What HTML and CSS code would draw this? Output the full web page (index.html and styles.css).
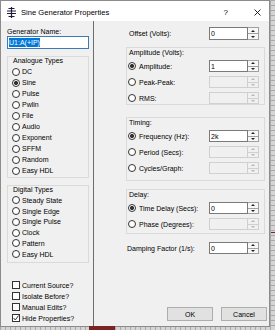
FILE: index.html
```html
<!DOCTYPE html>
<html lang="en">
<head>
  <meta charset="UTF-8" />
  <title>Sine Generator Properties</title>
  <link rel="stylesheet" href="styles.css">
</head>
<body>
  <div class="canvas">
    <div class="wire wire-bottom"></div>
    <div class="wire wire-right"></div>

    <div class="dialog">
      <div class="titlebar">
        <svg class="app-icon" width="9" height="11" viewBox="0 0 9 11">
          <path d="M4.5 0v11" stroke="#1c1c3a" stroke-width="1.2" fill="none"/>
          <path d="M1.5 1.5h6M0 4h9M0 6.5h9M1.5 9.5h6" stroke="#1c1c3a" stroke-width="1.1" fill="none"/>
        </svg>
        <span class="title">Sine Generator Properties</span>
        <span class="help">?</span>
        <svg class="close" width="7" height="7" viewBox="0 0 7 7">
          <path d="M0.5 0.5l6 6M6.5 0.5l-6 6" stroke="#111" stroke-width="0.9" fill="none"/>
        </svg>
      </div>

      <div class="content">
        <div class="left">
          <div class="name-label">Generator Name:</div>
          <div class="name-input"><span class="sel">U1:A(+IP)</span></div>

          <div class="group types analogue">
            <div class="caption">Analogue Types</div>
            <label class="opt"><span class="radio"></span>DC</label>
            <label class="opt"><span class="radio checked"></span>Sine</label>
            <label class="opt"><span class="radio"></span>Pulse</label>
            <label class="opt"><span class="radio"></span>Pwlin</label>
            <label class="opt"><span class="radio"></span>File</label>
            <label class="opt"><span class="radio"></span>Audio</label>
            <label class="opt"><span class="radio"></span>Exponent</label>
            <label class="opt"><span class="radio"></span>SFFM</label>
            <label class="opt"><span class="radio"></span>Random</label>
            <label class="opt"><span class="radio"></span>Easy HDL</label>
          </div>

          <div class="group types digital">
            <div class="caption">Digital Types</div>
            <label class="opt"><span class="radio"></span>Steady State</label>
            <label class="opt"><span class="radio"></span>Single Edge</label>
            <label class="opt"><span class="radio"></span>Single Pulse</label>
            <label class="opt"><span class="radio"></span>Clock</label>
            <label class="opt"><span class="radio"></span>Pattern</label>
            <label class="opt"><span class="radio"></span>Easy HDL</label>
          </div>

          <div class="checks">
            <label class="opt"><span class="box"></span>Current Source?</label>
            <label class="opt"><span class="box"></span>Isolate Before?</label>
            <label class="opt"><span class="box"></span>Manual Edits?</label>
            <label class="opt">
              <span class="box">
                <svg width="6" height="6" viewBox="0 0 6 6"><path d="M0.5 3l1.8 2 3.2-4.5" stroke="#222" stroke-width="0.9" fill="none"/></svg>
              </span>Hide Properties?
            </label>
          </div>
        </div>

        <div class="right">
          <div class="row plain offset">
            <span class="lbl">Offset (Volts):</span>
            <div class="spin"><div class="field">0</div><div class="arrows"><span class="up"></span><span class="down"></span></div></div>
          </div>

          <div class="group panel amp">
            <div class="caption">Amplitude (Volts):</div>
            <div class="row">
              <label class="lbl"><span class="radio checked"></span>Amplitude:</label>
              <div class="spin"><div class="field">1</div><div class="arrows"><span class="up"></span><span class="down"></span></div></div>
            </div>
            <div class="row">
              <label class="lbl"><span class="radio"></span>Peak-Peak:</label>
              <div class="spin off"><div class="field"></div><div class="arrows"><span class="up"></span><span class="down"></span></div></div>
            </div>
            <div class="row">
              <label class="lbl"><span class="radio"></span>RMS:</label>
              <div class="spin off"><div class="field"></div><div class="arrows"><span class="up"></span><span class="down"></span></div></div>
            </div>
          </div>

          <div class="group panel timing">
            <div class="caption">Timing:</div>
            <div class="row">
              <label class="lbl"><span class="radio checked"></span>Frequency (Hz):</label>
              <div class="spin"><div class="field">2k</div><div class="arrows"><span class="up"></span><span class="down"></span></div></div>
            </div>
            <div class="row">
              <label class="lbl"><span class="radio"></span>Period (Secs):</label>
              <div class="spin off"><div class="field"></div><div class="arrows"><span class="up"></span><span class="down"></span></div></div>
            </div>
            <div class="row">
              <label class="lbl"><span class="radio"></span>Cycles/Graph:</label>
              <div class="spin off"><div class="field"></div><div class="arrows"><span class="up"></span><span class="down"></span></div></div>
            </div>
          </div>

          <div class="group panel delay">
            <div class="caption">Delay:</div>
            <div class="row">
              <label class="lbl"><span class="radio checked"></span>Time Delay (Secs):</label>
              <div class="spin"><div class="field">0</div><div class="arrows"><span class="up"></span><span class="down"></span></div></div>
            </div>
            <div class="row">
              <label class="lbl"><span class="radio"></span>Phase (Degrees):</label>
              <div class="spin off"><div class="field"></div><div class="arrows"><span class="up"></span><span class="down"></span></div></div>
            </div>
          </div>

          <div class="row plain damping">
            <span class="lbl">Damping Factor (1/s):</span>
            <div class="spin"><div class="field">0</div><div class="arrows"><span class="up"></span><span class="down"></span></div></div>
          </div>

          <div class="buttons">
            <button>OK</button>
            <button>Cancel</button>
          </div>
        </div>
      </div>
    </div>
  </div>
</body>
</html>
```

FILE: styles.css
```css
* {
  box-sizing: border-box;
}
body {
  margin: 0;
  font-family: "Liberation Sans", Arial, sans-serif;
  font-size: 7px;
  color: #000;
}
.canvas {
  position: relative;
  width: 275px;
  height: 330px;
  overflow: hidden;
  background-color: #d4d4d4;
  background-image:
    linear-gradient(90deg, #a9a9a9 1px, transparent 1px),
    linear-gradient(#a9a9a9 1px, transparent 1px);
  background-size: 5px 5px;
}
.wire {
  position: absolute;
  background: #7a2424;
}
.wire-bottom {
  left: 89px;
  top: 326px;
  width: 26px;
  height: 4px;
}
.wire-right {
  left: 271px;
  top: 232px;
  width: 4px;
  height: 1px;
}

/* dialog frame */
.dialog {
  width: 270px;
  height: 327px;
  background: #f0f0f0;
  border: 1px solid #8c8c8c;
  display: flex;
  flex-direction: column;
}
.titlebar {
  height: 20px;
  flex: none;
  background: #fff;
  display: flex;
  align-items: center;
  padding: 2px 8px 0 6px;
}
.app-icon {
  flex: none;
}
.title {
  margin-left: 5px;
  font-size: 7.6px;
}
.help {
  margin-left: auto;
  font-size: 8px;
  margin-right: 26px;
}
.close {
  flex: none;
}
.content {
  flex: 1;
  display: flex;
}

/* left column */
.left {
  width: 93px;
  flex: none;
  border-right: 1px solid #6d6d6d;
  padding: 6px 0 0 6px;
}
.name-label {
  line-height: 9px;
  height: 9px;
}
.name-input {
  width: 82px;
  height: 13px;
  border: 1px solid #3d7ab8;
  background: #fff;
  padding: 1px 0 0 1px;
}
.sel {
  display: inline-block;
  background: #0078d7;
  color: #fff;
  line-height: 9px;
}
.group {
  border: 1px solid #dadada;
}
.caption {
  line-height: 7px;
  height: 7px;
}
.types {
  width: 82px;
  margin-top: 7px;
}
.types .caption {
  line-height: 8px;
  height: 8px;
  padding-left: 5px;
  margin-bottom: 1px;
}
.opt {
  display: flex;
  align-items: center;
  white-space: nowrap;
}
.types .opt {
  height: 11px;
  padding-left: 4px;
}
.analogue {
  padding-bottom: 1px;
}
.digital .opt {
  height: 10.75px;
}
.digital {
  padding-bottom: 2px;
}
.radio {
  flex: none;
  width: 8px;
  height: 8px;
  border: 1px solid #333;
  border-radius: 50%;
  background: #fff;
  margin-right: 2px;
}
.radio.checked {
  background: radial-gradient(circle, #333 0 1.8px, #fff 2.3px);
}
.checks {
  margin-top: 17px;
  padding-left: 5px;
}
.checks .opt {
  height: 11px;
}
.box {
  flex: none;
  width: 8px;
  height: 8px;
  border: 1px solid #333;
  background: #fff;
  margin-right: 2px;
  display: flex;
  align-items: center;
  justify-content: center;
}

/* right column */
.right {
  flex: 1;
  display: flex;
  flex-direction: column;
  padding: 6px 0 0 32px;
}
.row {
  display: flex;
  align-items: center;
  height: 12px;
  margin-top: 4px;
}
.row .lbl {
  width: 82px;
  display: flex;
  align-items: center;
  padding-left: 1px;
  white-space: nowrap;
}
.row .radio {
  margin-right: 3px;
}
.row.plain {
  margin-top: 0;
}
.row.plain .lbl {
  width: 83px;
}
.offset {
  height: 13px;
}
.offset .lbl {
  padding-left: 3px;
}
.damping {
  margin-top: 8px !important;
}
.panel {
  width: 139px;
}
.panel .caption {
  padding-left: 2px;
  margin-top: 1px;
}
.amp {
  margin-top: 7px;
}
.timing {
  margin-top: 12px;
  padding-bottom: 6px;
}
.delay {
  margin-top: 8px;
  padding-bottom: 3px;
}
.delay .row:first-of-type {
  margin-top: 8px;
}
.spin {
  width: 50px;
  height: 100%;
  display: flex;
}
.field {
  width: 39px;
  height: 100%;
  border: 1px solid #7a7a7a;
  background: #fff;
  padding-left: 1px;
  display: flex;
  align-items: center;
}
.arrows {
  width: 11px;
  height: 100%;
  border: 1px solid #a0a0a0;
  border-left: none;
  background: #f7f7f7;
  display: flex;
  flex-direction: column;
}
.arrows span {
  flex: 1;
  display: flex;
  align-items: center;
  justify-content: center;
}
.arrows .down {
  border-top: 1px solid #a0a0a0;
}
.arrows .up::after,
.arrows .down::after {
  content: "";
  border-left: 2px solid transparent;
  border-right: 2px solid transparent;
}
.arrows .up::after {
  border-bottom: 2px solid #222;
}
.arrows .down::after {
  border-top: 2px solid #222;
}
.spin.off .field {
  background: #f0f0f0;
  border-color: #d0d0d0;
}
.spin.off .arrows {
  background: #f0f0f0;
  border-color: #d0d0d0;
}
.spin.off .arrows .down {
  border-top-color: #d0d0d0;
}
.spin.off .arrows .up::after {
  border-bottom-color: #b8b8b8;
}
.spin.off .arrows .down::after {
  border-top-color: #b8b8b8;
}
.buttons {
  margin-top: auto;
  margin-bottom: 5px;
  display: flex;
  justify-content: flex-end;
  gap: 8px;
  padding-right: 2px;
}
button {
  width: 46px;
  height: 14px;
  padding: 0;
  font-family: inherit;
  font-size: 7px;
  color: #000;
  background: #e1e1e1;
  border: 1px solid #adadad;
}
```
